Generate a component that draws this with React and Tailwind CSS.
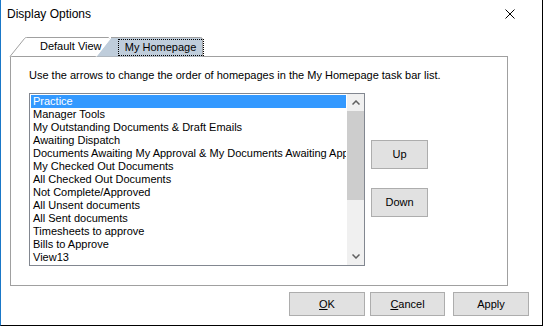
import React from "react";

const items = [
  "Practice",
  "Manager Tools",
  "My Outstanding Documents & Draft Emails",
  "Awaiting Dispatch",
  "Documents Awaiting My Approval & My Documents Awaiting Approval",
  "My Checked Out Documents",
  "All Checked Out Documents",
  "Not Complete/Approved",
  "All Unsent documents",
  "All Sent documents",
  "Timesheets to approve",
  "Bills to Approve",
  "View13",
];

function Btn({ children, className }) {
  return (
    <div
      className={
        "flex items-center justify-center border border-[#adadad] bg-[#e1e1e1] text-[11px] text-black " +
        className
      }
    >
      {children}
    </div>
  );
}

export default function App() {
  return (
    <div className="w-[543px] h-[326px] bg-white border-l border-l-[#1a78c8] border-r border-r-black border-b border-b-black flex flex-col font-['Liberation_Sans',Arial,sans-serif] text-black overflow-hidden">
      {/* Title bar */}
      <div className="h-[28px] flex items-center justify-between pl-[6px] pr-[27px] shrink-0">
        <span className="text-[12px] leading-none">Display Options</span>
        <svg width="10" height="10" viewBox="0 0 10 10">
          <path d="M0.5 0.5 L9.5 9.5 M9.5 0.5 L0.5 9.5" stroke="#000" strokeWidth="1" />
        </svg>
      </div>

      {/* Tab strip */}
      <div className="relative h-[19px] mt-[9px] shrink-0 flex items-center text-[11px]">
        <svg className="absolute left-0 top-0" width="210" height="20" viewBox="0 0 210 20">
          <path d="M9 19.5 L23.5 1.5 Q24.3 0.5 25.5 0.5 L107.5 0.5 L108.5 1.5" fill="#ffffff" stroke="#a0a0a0" strokeWidth="1" />
          <path d="M95.5 19.5 L110 1 L199.5 0.5 Q201.5 0.5 201.5 2.5 L201.5 19.5 Z" fill="#bfcddb" stroke="none" />
          <path d="M110 0.5 L199.5 0.5 Q201.5 0.5 201.5 2.5 L201.5 19.5" fill="none" stroke="#a0a0a0" strokeWidth="1" />
          <path d="M95 19.5 L109.5 1" fill="none" stroke="#ffffff" strokeWidth="1.2" />
        </svg>
        <span className="relative ml-[39px]">Default View</span>
        <span className="relative ml-[16px] w-[86px] h-[17px] mt-[2px] border border-dotted border-black flex items-center justify-center">
          My Homepage
        </span>
      </div>

      {/* Panel */}
      <div className="ml-[9px] w-[498px] h-[230px] border border-[#a0a0a0] shrink-0 flex flex-col text-[11px]">
        <div className="pl-[18px] pt-[12px] h-[25px] leading-[13px]">
          Use the arrows to change the order of homepages in the My Homepage task bar list.
        </div>
        <div className="flex ml-[18px] mt-[11px]">
          {/* Listbox */}
          <div className="w-[336px] h-[173px] border border-[#828790] flex">
            <div className="w-[317px] pl-[1px] pt-[1px] overflow-hidden">
              {items.map((t, i) => (
                <div
                  key={t}
                  className={
                    "h-[13px] leading-[13px] pl-[2px] whitespace-nowrap overflow-hidden w-[315px] " +
                    (i === 0 ? "bg-[#3399ff] text-white" : "")
                  }
                >
                  {t}
                </div>
              ))}
            </div>
            {/* Scrollbar */}
            <div className="w-[17px] h-full bg-[#f0f0f0] flex flex-col">
              <div className="h-[17px] flex items-center justify-center">
                <svg width="8" height="5" viewBox="0 0 8 5">
                  <path d="M0.5 4.5 L4 1 L7.5 4.5" fill="none" stroke="#606060" strokeWidth="1.5" />
                </svg>
              </div>
              <div className="h-[89px] bg-[#cdcdcd]"></div>
              <div className="flex-1"></div>
              <div className="h-[17px] flex items-center justify-center">
                <svg width="8" height="5" viewBox="0 0 8 5">
                  <path d="M0.5 0.5 L4 4 L7.5 0.5" fill="none" stroke="#606060" strokeWidth="1.5" />
                </svg>
              </div>
            </div>
          </div>
          {/* Side buttons */}
          <div className="ml-[6px] flex flex-col">
            <Btn className="w-[57px] h-[29px] mt-[47px]">Up</Btn>
            <Btn className="w-[57px] h-[29px] mt-[19px]">Down</Btn>
          </div>
        </div>
      </div>

      {/* Bottom buttons */}
      <div className="flex mt-[6px] ml-[288px]">
        <Btn className="w-[76px] h-[24px]">
          <span><span className="underline">O</span>K</span>
        </Btn>
        <Btn className="w-[75px] h-[24px] ml-[5px]">
          <span><span className="underline">C</span>ancel</span>
        </Btn>
        <Btn className="w-[76px] h-[24px] ml-[8px]">Apply</Btn>
      </div>
    </div>
  );
}
